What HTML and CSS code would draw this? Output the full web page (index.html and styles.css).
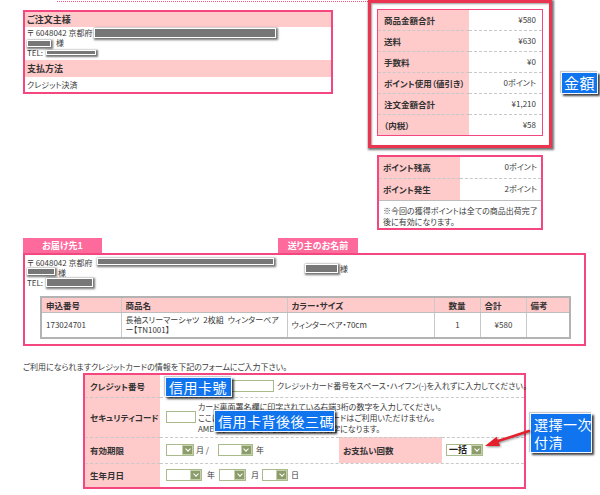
FILE: index.html
```html
<!DOCTYPE html>
<html lang="ja">
<head>
<meta charset="utf-8">
<title>ご注文内容の確認</title>
<link rel="stylesheet" href="styles.css">
</head>
<body>
<div class="page">
  <div class="top">
    <div class="left-col">
      <div class="dotline"></div>
      <div class="box order-box">
        <div class="hd">ご注文主様</div>
        <div class="addr">
          <div class="line">〒 6048042 京都府<span class="redact o-long"></span></div>
          <div class="line"><span class="redact o-name"></span>様</div>
          <div class="line">TEL:<span class="redact o-tel"></span></div>
        </div>
        <div class="hd hd2">支払方法</div>
        <div class="cell">クレジット決済</div>
      </div>
    </div>
    <div class="right-col">
      <div class="totals-frame">
        <table class="kv kv-totals">
          <tr><th>商品金額合計</th><td>¥580</td></tr>
          <tr><th>送料</th><td>¥630</td></tr>
          <tr><th>手数料</th><td>¥0</td></tr>
          <tr><th>ポイント使用（値引き）</th><td>0ポイント</td></tr>
          <tr><th>注文金額合計</th><td>¥1,210</td></tr>
          <tr><th>（内税）</th><td>¥58</td></tr>
        </table>
      </div>
      <div class="points">
        <table class="kv kv-points">
          <tr><th>ポイント残高</th><td>0ポイント</td></tr>
          <tr class="last"><th>ポイント発生</th><td>2ポイント</td></tr>
        </table>
        <p class="note">※今回の獲得ポイントは全ての商品出荷完了<br>後に有効になります。</p>
      </div>
    </div>
  </div>

  <div class="deliv">
    <div class="tabs">
      <div class="tab tab1">お届け先1</div>
      <div class="tab tab2">送り主のお名前</div>
    </div>
    <div class="dbox">
      <div class="dtop">
        <div class="daddr">
          <div class="line">〒 6048042 京都府<span class="redact d-long"></span></div>
          <div class="line"><span class="redact d-name"></span>様</div>
          <div class="line">TEL:<span class="redact d-tel"></span></div>
        </div>
        <div class="dsender"><span class="redact s-name"></span>様</div>
      </div>
      <table class="items">
        <colgroup>
          <col class="c1"><col class="c2"><col class="c3"><col class="c4"><col class="c5"><col class="c6">
        </colgroup>
        <tr><th>申込番号</th><th>商品名</th><th>カラー・サイズ</th><th class="ctr">数量</th><th>合計</th><th>備考</th></tr>
        <tr><td>173024701</td><td class="nw">長袖スリーマーシャツ&ensp;2枚組&ensp;ウィンターベア<br>ー【TN1001】</td><td>ウィンターベア・70cm</td><td class="ctr">1</td><td class="ctr">¥580</td><td></td></tr>
      </table>
    </div>
  </div>

  <p class="credit-note">ご利用になられますクレジットカードの情報を下記のフォームにご入力下さい。</p>
  <div class="form">
    <div class="fl">クレジット番号</div>
    <div class="fv span3"><span class="inp w-card"></span><span class="hint">クレジットカード番号をスペース・ハイフン(-)を入れずに入力してください。</span></div>

    <div class="fl sep">セキュリティコード</div>
    <div class="fv span3 sep"><span class="inp w-cvv"></span><div class="hint3">カード裏面署名欄に印字されている右端3桁の数字を入力してください。<br>ここに3桁の番号が記載されていないカードはご利用いただけません。<br>AMEXカードの場合は表面右上4桁の数字になります。</div></div>

    <div class="fl sep">有効期限</div>
    <div class="fv sep"><span class="sel w28"><span class="arr"></span></span><span class="u u-m">月 /</span><span class="sel w35"><span class="arr"></span></span><span class="u">年</span></div>
    <div class="fl fl2 sep">お支払い回数</div>
    <div class="fv fv2 sep"><span class="sel w37"><span class="opt">一括</span><span class="arr"></span></span></div>

    <div class="fl sep">生年月日</div>
    <div class="fv span3 sep"><span class="sel w36"><span class="arr"></span></span><span class="u u-y">年</span><span class="sel w27"><span class="arr"></span></span><span class="u u-mo">月</span><span class="sel w26"><span class="arr"></span></span><span class="u">日</span></div>
  </div>

  <div class="ann ann-kingaku">金額</div>
  <div class="ann ann-card">信用卡號</div>
  <div class="ann ann-cvv">信用卡背後後三碼</div>
  <div class="ann ann-pay">選擇一次<br>付清</div>
  <svg class="arrow" width="56" height="28" viewBox="0 0 56 28" aria-hidden="true">
    <line x1="18" y1="16" x2="49" y2="6" stroke="#e3202c" stroke-width="2.4" stroke-linecap="round"/>
    <polygon points="5,21 16.5,11.7 20,21.1" fill="#e3202c"/>
  </svg>
</div>
</body>
</html>
```

FILE: styles.css
```css
* { box-sizing: border-box; margin: 0; padding: 0; }
html, body { background: #fff; }
body {
  margin: 0;
  font-family: "Noto Sans CJK JP", "Noto Sans", sans-serif;
  font-size: 8px;
  line-height: 10px;
  color: #3a3a3a;
  font-feature-settings: "palt" 1;
}
.page { position: relative; width: 600px; height: 495px; overflow: hidden; }

/* top area */
.top { display: flex; align-items: flex-start; padding-left: 23px; }
.left-col { width: 345px; flex: none; }
.dotline { margin: 1px 0 0 34px; border-top: 1px dotted #f25b7e; }
.box { border: 2px solid #f4467f; }
.order-box { width: 310px; margin-top: 8px; }
.hd { background: #ffcaca; font-weight: bold; font-size: 9px; height: 15px; line-height: 15px; padding-left: 2px; color: #333; }
.hd2 { height: 17px; line-height: 17px; }
.addr { padding: 1px 2px 2px; }
.line { height: 10px; line-height: 10px; white-space: nowrap; }
.cell { height: 15px; line-height: 15px; padding-left: 2px; }

.redact {
  display: inline-block;
  vertical-align: top;
  background: #777;
  border: 1px solid #fff;
  box-shadow: 1px 1px 2px 1px rgba(0,0,0,.55);
}
.o-long { width: 182px; height: 10px; margin-left: 1px; }
.o-name { width: 24px; height: 7px; margin: 2px 5px 0 0; }
.o-tel { width: 50px; height: 5px; margin: 2px 0 0 3px; }

.right-col { flex: none; }
.totals-frame {
  width: 184px;
  height: 148px;
  border: 3px solid #ea3450;
  padding: 6px 0 0 6px;
  background: #fff;
  box-shadow: 1px 1px 2px 1px rgba(0,0,0,.55), inset 1px 1px 2px rgba(0,0,0,.4);
}
.kv { border-collapse: collapse; width: 166px; table-layout: fixed; }
.kv th, .kv td { height: 21px; border-bottom: 1px dashed #c8c8c8; white-space: nowrap; }
.kv th { background: #ffcaca; text-align: left; font-weight: bold; font-size: 8.5px; color: #333; padding-left: 6px; }
.kv td { text-align: right; padding-right: 6px; }
.kv-totals { border: 1px solid #f4467f; }
.kv-totals th { width: 91px; }
.kv-totals tr:last-child th, .kv-totals tr:last-child td { border-bottom: none; }

.points { width: 166px; margin: 7px 0 0 9px; border: 2px solid #f4467f; }
.kv-points { width: 162px; }
.kv-points th { width: 81px; padding-left: 4px; }
.kv-points td { padding-right: 4px; }
.kv-points tr.last th, .kv-points tr.last td { height: 22px; border-bottom: 1px solid #bdbdbd; }
.note { padding: 4px 4px 1px; line-height: 11px; white-space: nowrap; }

/* delivery */
.deliv { margin-top: 8px; padding-left: 23px; }
.tabs { display: flex; height: 15px; }
.tab { height: 15px; line-height: 15px; background: #ff6a9c; color: #fff; font-weight: bold; font-size: 9px; text-align: center; }
.tab1 { width: 79px; }
.tab2 { width: 80px; margin-left: 176px; }
.dbox { width: 563px; height: 93px; border: 2px solid #f4467f; }
.dtop { display: flex; padding: 3px 0 0 2px; }
.daddr { width: 251px; flex: none; }
.daddr .line { height: 10px; line-height: 10px; }
.dsender { padding: 6px 0 0 27px; line-height: 10px; white-space: nowrap; }
.d-long { width: 177px; height: 7px; margin: 0 0 0 4px; }
.d-name { width: 28px; height: 7px; margin-right: 3px; }
.d-tel { width: 47px; height: 9px; margin-left: 3px; }
.s-name { width: 33px; height: 9px; margin-right: 2px; }

.items { margin: 8px 0 0 15px; width: 529px; border-collapse: collapse; table-layout: fixed; border: 2px solid #b3b3b3; }
.items .c1 { width: 80px; }
.items .c2 { width: 166px; }
.items .c3 { width: 147px; }
.items .c4 { width: 46px; }
.items .c5 { width: 46px; }
.items .c6 { width: 44px; }
.items th { background: #ffcaca; height: 16px; text-align: left; font-weight: bold; font-size: 8.5px; color: #333; padding: 0 4px; border-right: 1px solid #c9c9c9; border-bottom: 1px solid #bdbdbd; }
.items td { height: 25px; padding: 0 3px 0 4px; border-right: 1px solid #c9c9c9; }
.items .ctr { text-align: center; }
.items .nw { white-space: nowrap; }

/* credit form */
.credit-note { margin: 16px 0 0 23px; line-height: 10px; }
.form {
  display: grid;
  grid-template-columns: 75px 179px 103px 82px;
  grid-template-rows: 22px 40px 26px 24px;
  width: 443px;
  margin: 1px 0 0 83px;
  border: 2px solid #f4467f;
}
.fl { background: #ffcaca; font-weight: bold; font-size: 8.5px; color: #333; display: flex; align-items: center; padding-left: 5px; white-space: nowrap; }
.fl2 { padding-left: 4px; }
.fv { display: flex; align-items: center; padding-left: 6px; white-space: nowrap; }
.fv2 { padding-left: 4px; }
.span3 { grid-column: span 3; }
.sep { border-top: 1px dashed #c9c9c9; }

.inp { display: inline-block; flex: none; height: 12px; border: 1px solid #a9ba8c; background: #fff; }
.w-card { width: 108px; }
.w-cvv { width: 30px; }
.hint { margin-left: 3px; }
.hint3 { margin-left: 2px; line-height: 11px; }

.sel { display: inline-flex; flex: none; align-items: stretch; height: 12px; border: 1px solid #a9ba8c; background: #fff; }
.sel .opt { flex: 1; line-height: 10px; padding-left: 2px; color: #222; font-weight: bold; font-size: 9px; }
.sel .arr { width: 11px; margin-left: auto; background: #8c9d6b; border: 1px solid #c5d1ad; display: flex; align-items: center; justify-content: center; }
.sel .arr::after { content: ""; width: 3px; height: 3px; border-right: 1.5px solid #fff; border-bottom: 1.5px solid #fff; transform: translateY(-1px) rotate(45deg); }
.w26 { width: 26px; }
.w27 { width: 27px; }
.w28 { width: 28px; }
.w35 { width: 35px; }
.w36 { width: 36px; }
.w37 { width: 37px; }
.u { margin-left: 3px; }
.u-m { margin-right: 9px; margin-left: 2px; }
.u-y { margin: 0 4px 0 5px; }
.u-mo { margin: 0 3px 0 5px; }

/* annotations */
.ann {
  position: absolute;
  background: #0f74ee;
  color: #fff;
  font-family: "Noto Sans CJK TC", "Noto Sans CJK JP", sans-serif;
  font-feature-settings: normal;
  font-size: 14px;
  line-height: 18px;
  letter-spacing: 0.5px;
  border: 1px solid #f2f6ff;
  box-shadow: 2px 2px 2px rgba(0,0,0,.75), -1px -1px 1px rgba(0,0,0,.2);
  padding-left: 3px;
  white-space: nowrap;
}
.ann-kingaku { left: 561px; top: 72px; width: 37px; height: 22px; font-size: 15px; line-height: 19px; padding-left: 2px; }
.ann-card { left: 165px; top: 377px; width: 67px; height: 20px; }
.ann-cvv { left: 214px; top: 410px; width: 121px; height: 22px; line-height: 20px; }
.ann-pay { left: 530px; top: 413px; width: 62px; height: 40px; padding-top: 1px; line-height: 18px; }
.arrow { position: absolute; left: 480px; top: 425px; filter: drop-shadow(1px 1px 1px rgba(0,0,0,.45)); }
```
